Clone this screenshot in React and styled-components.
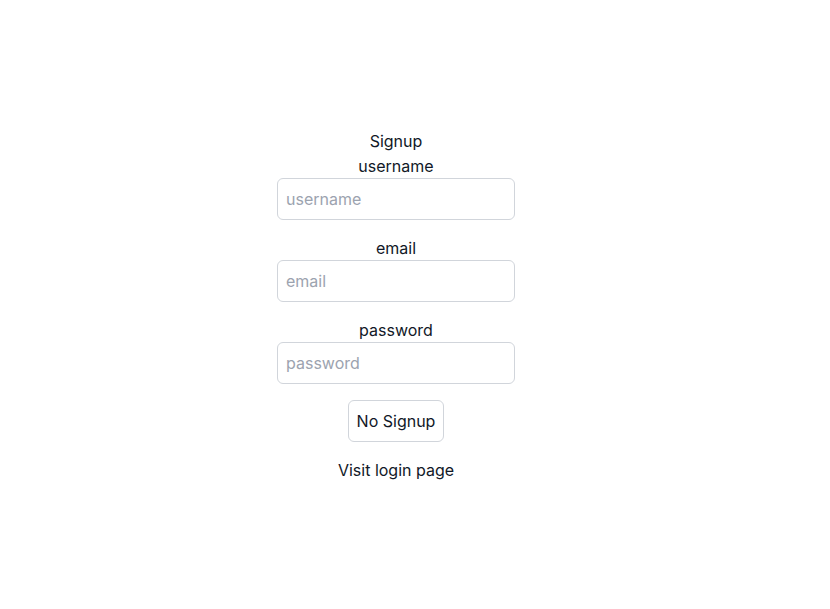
import React from 'react';
import styled, { createGlobalStyle } from 'styled-components';

const GlobalStyle = createGlobalStyle`
  html, body {
    margin: 0;
    padding: 0;
    background: #ffffff;
  }
  body {
    font-family: Inter, "Noto Sans", sans-serif;
    font-size: 16px;
    line-height: 24px;
    color: #111827;
  }
`;

const Page = styled.div`
  width: 792px;
  height: 609px;
  display: flex;
  align-items: center;
  justify-content: center;
`;

const Form = styled.form`
  display: flex;
  flex-direction: column;
  align-items: center;
  gap: 16px;
  margin-top: 1px;
`;

const Title = styled.div`
  margin-bottom: -15px;
`;

const Field = styled.label`
  display: flex;
  flex-direction: column;
  align-items: center;
`;

const Input = styled.input`
  box-sizing: border-box;
  width: 238px;
  height: 42px;
  padding: 0 8px;
  border: 1px solid #d1d5db;
  border-radius: 6px;
  font-family: inherit;
  font-size: 16px;
  color: #111827;
  outline: none;
  &::placeholder {
    color: #9ca3af;
  }
`;

const Button = styled.button`
  box-sizing: border-box;
  height: 42px;
  padding: 0 8px;
  background: #ffffff;
  border: 1px solid #d1d5db;
  border-radius: 6px;
  font-family: inherit;
  font-size: 16px;
  color: #111827;
  cursor: pointer;
`;

const LinkText = styled.a`
  color: #111827;
  text-decoration: none;
`;

function App() {
  const fields = ['username', 'email', 'password'];
  return (
    <>
      <GlobalStyle />
      <Page>
        <Form onSubmit={e => e.preventDefault()}>
          <Title>Signup</Title>
          {fields.map(f => (
            <Field key={f}>
              {f}
              <Input type={f === 'password' ? 'password' : 'text'} placeholder={f} />
            </Field>
          ))}
          <Button type="submit">No Signup</Button>
          <LinkText href="#">Visit login page</LinkText>
        </Form>
      </Page>
    </>
  );
}

export default App;
